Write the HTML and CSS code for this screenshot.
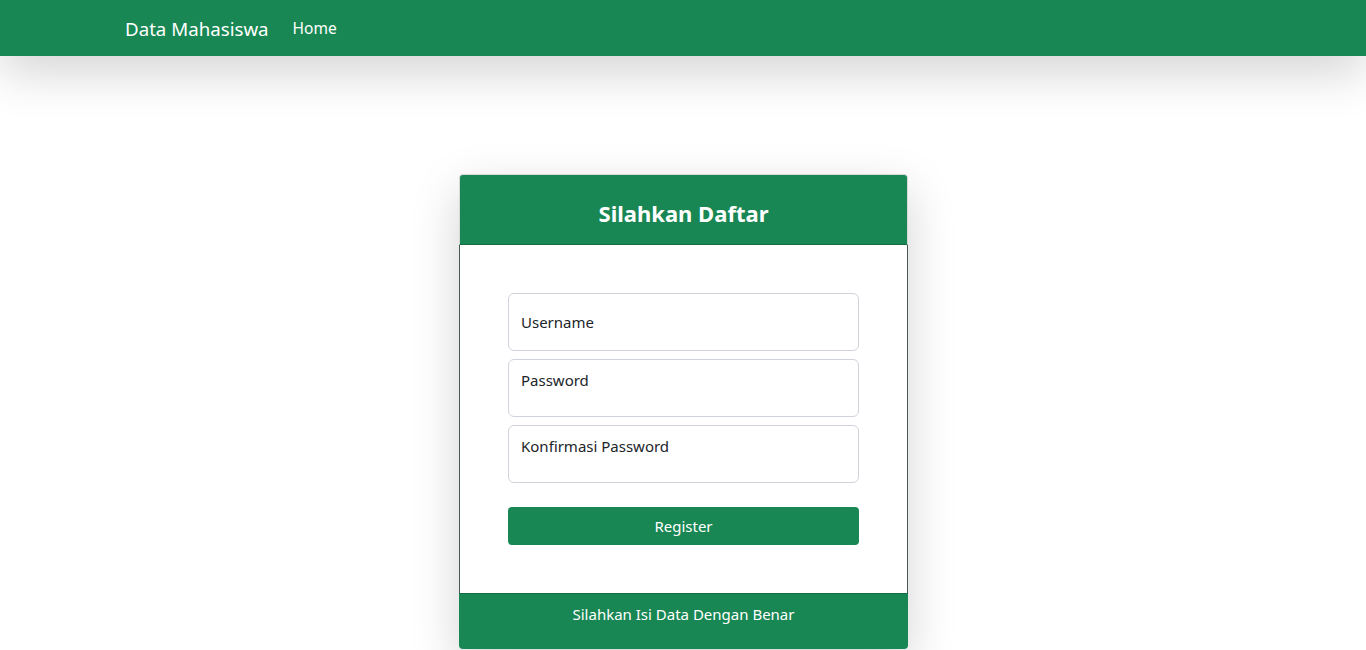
FILE: index.html
```html
<!DOCTYPE html>
<html lang="id">
<head>
<meta charset="utf-8">
<title>Data Mahasiswa</title>
<link rel="stylesheet" href="styles.css">
</head>
<body>
<nav class="navbar">
  <div class="nav-container">
    <a class="brand" href="#">Data Mahasiswa</a>
    <a class="nav-link" href="#">Home</a>
  </div>
</nav>
<main class="page">
  <div class="card">
    <div class="card-header"><h3 class="card-title">Silahkan Daftar</h3></div>
    <div class="card-body">
      <form class="form">
        <div class="field field-center">Username</div>
        <div class="field">Password</div>
        <div class="field">Konfirmasi Password</div>
        <button type="button" class="btn">Register</button>
      </form>
    </div>
    <div class="card-footer">Silahkan Isi Data Dengan Benar</div>
  </div>
</main>
</body>
</html>
```
FILE: styles.css
```css
* { box-sizing: border-box; }
html, body { margin: 0; padding: 0; }
body {
  font-family: "Noto Sans", "Open Sans", sans-serif;
  font-size: 16px;
  color: #212529;
  background: #fff;
  overflow: hidden;
  height: 650px;
}
.navbar {
  background: #198754;
  height: 56px;
  box-shadow: 0 16px 48px rgba(0,0,0,.175);
  position: relative;
  z-index: 1;
}
.nav-container {
  width: 1140px;
  margin: 0 auto;
  padding: 0 12px;
  height: 56px;
  display: flex;
  align-items: center;
}
.brand {
  color: #fff;
  text-decoration: none;
  font-size: 18.7px;
  margin-right: 16px;
  padding: 4px 0;
}
.nav-link {
  color: #fff;
  text-decoration: none;
  font-size: 15.5px;
  padding: 8px;
  margin-top: -1px;
}
.page {
  display: flex;
  justify-content: center;
  padding-top: 118px;
}
.card {
  width: 449px;
  margin-left: 1px;
  border-radius: 4px;
  box-shadow: 0 16px 48px rgba(0,0,0,.175);
  background: #fff;
}
.card-header {
  background: #198754;
  border: 1px solid #d9d9d9;
  border-bottom: 1px solid #146c43;
  border-radius: 4px 4px 0 0;
  height: 71px;
  display: flex;
  align-items: center;
  justify-content: center;
}
.card-title {
  margin: 0;
  color: #fff;
  font-size: 22px;
  font-weight: 700;
  padding-top: 6px;
}
.card-body {
  border-left: 1px solid #4a5a52;
  border-right: 1px solid #4a5a52;
  padding: 48px 48px;
}
.form {
  display: flex;
  flex-direction: column;
  gap: 8px;
}
.field {
  height: 58px;
  border: 1px solid #ced4da;
  border-radius: 6px;
  padding: 10px 12px;
  font-size: 15px;
  line-height: 20px;
  color: #212529;
}
.field-center {
  padding-top: 18px;
}
.btn {
  margin-top: 16px;
  height: 38px;
  border: none;
  border-radius: 4px;
  background: #198754;
  color: #fff;
  font-family: inherit;
  font-size: 15px;
}
.card-footer {
  background: #198754;
  border-top: 1px solid #146c43;
  border-radius: 0 0 4px 4px;
  height: 56px;
  color: #fff;
  font-size: 15px;
  text-align: center;
  padding-top: 10px;
}
```
